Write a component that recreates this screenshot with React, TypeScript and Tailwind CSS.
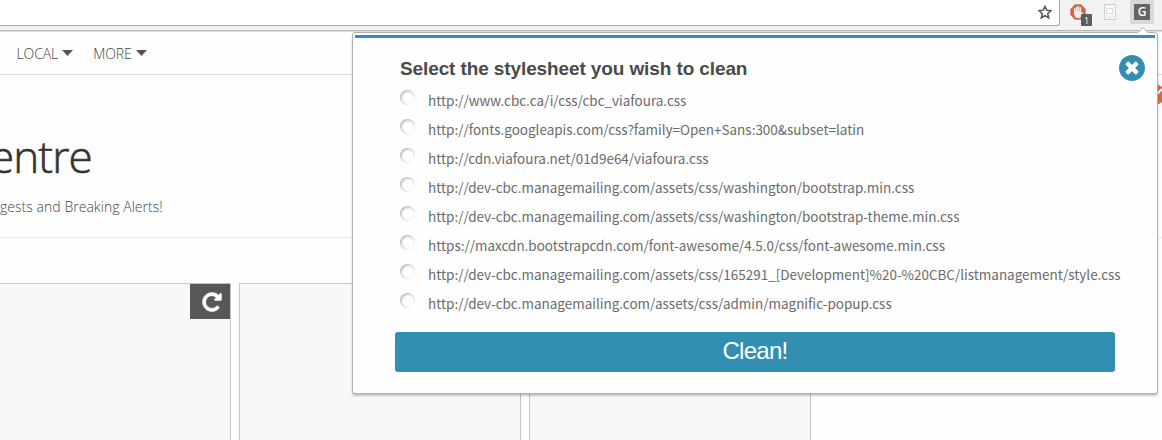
const SHEETS = [
  'http://www.cbc.ca/i/css/cbc_viafoura.css',
  'http://fonts.googleapis.com/css?family=Open+Sans:300&subset=latin',
  'http://cdn.viafoura.net/01d9e64/viafoura.css',
  'http://dev-cbc.managemailing.com/assets/css/washington/bootstrap.min.css',
  'http://dev-cbc.managemailing.com/assets/css/washington/bootstrap-theme.min.css',
  'https://maxcdn.bootstrapcdn.com/font-awesome/4.5.0/css/font-awesome.min.css',
  'http://dev-cbc.managemailing.com/assets/css/165291_[Development]%20-%20CBC/listmanagement/style.css',
  'http://dev-cbc.managemailing.com/assets/css/admin/magnific-popup.css',
];

function Toolbar() {
  return (
    <header className="flex h-[31px] shrink-0 border-b border-[#b6b6b6] bg-[#f2f2f2]">
      <div className="flex h-[26px] w-[1060px] shrink-0 items-center justify-end rounded-br-[3px] border-r border-b border-[#a9a9a9] bg-white pr-[7px]">
        <svg className="-mt-px h-[14px] w-[14px]" viewBox="1 1 14 14" fill="none" stroke="#5a5a5a" strokeWidth="1.5">
          <path d="M8 2.300 9.800 6.2l4.200.4-3.300 3.100 1.100 4.300L8 11.600 4.200 14l1.100-4.300L2 6.600l4.200-.4z" />
        </svg>
      </div>
      <div className="flex grow items-start pl-[10px]">
        <div className="relative mt-[4px] h-[22px] w-[22px]">
          <svg className="h-[16px] w-[16px]" viewBox="0 0 16 16">
            <path d="M5 .3h6L15.700 5v6L11 15.700H5L.3 11V5z" fill="#cb6a45" />
            <path d="M4 8V4.500q.7-.8 1.400 0V7l.4 0V3q.8-.9 1.500 0v4h.4V2.500q.8-.8 1.500 0V7h.4V3.500q.8-.8 1.500 0V9l1-1q1-.3 1 .6L10.800 13 9.500 14H6.500Q4 12.500 4 8z" fill="#f4ece9" />
          </svg>
          <span className="absolute top-[10px] left-[11px] flex h-[12px] w-[11px] items-center justify-center rounded-[1px] bg-[#5c5c5c] font-['Open_Sans',sans-serif] text-[9px] leading-none text-white">1</span>
        </div>
        <svg className="mt-[4px] ml-[12px] h-[16px] w-[12px]" viewBox="0 0 12 16" fill="none">
          <path d="M.5.5h11v15H.5z" fill="#f7f7f7" stroke="#cfcfcf" />
          <path d="M2.500 4.500h6v5h-6z" fill="#fff" stroke="#dadada" />
          <path d="M2 13h8" stroke="#e6e6e6" />
        </svg>
        <div className="ml-[14px] flex h-[24px] w-[24px] items-center justify-center rounded-[2px] bg-[#d8d8d8]">
          <span className="flex h-[16px] w-[16px] items-center justify-center rounded-[1px] bg-[#666] font-['Open_Sans',sans-serif] text-[12px] leading-none font-semibold text-white">G</span>
        </div>
      </div>
    </header>
  );
}

function NavItem({ label }: { label: string }) {
  return (
    <a className="flex items-center gap-[4px] text-[14px] font-light tracking-[-0.1px] text-[#444]">
      {label}
      <svg className="h-[6px] w-[11px]" viewBox="0 0 11 6">
        <path d="M0 0h11L5.500 6z" fill="#555" />
      </svg>
    </a>
  );
}

function Page() {
  return (
    <div className="flex grow flex-col font-['Open_Sans',sans-serif]">
      <nav className="flex h-[44px] shrink-0 items-center gap-[20px] border-t border-b border-t-[#dedede] border-b-[#d8d8d8] pl-[16.5px]">
        <NavItem label="LOCAL" />
        <NavItem label="MORE" />
      </nav>
      <section className="flex h-[163px] shrink-0 flex-col border-b border-[#ececec]">
        <h1 className="mt-[51px] -ml-[10px] h-[60px] text-[44px] leading-[60px] font-light tracking-[-0.9px] text-[#333] [-webkit-text-stroke:0.6px_#333]">entre</h1>
        <p className="mt-[11px] text-[14px] leading-[20px] font-light tracking-[0.04px] text-[#444]">gests and Breaking Alerts!</p>
      </section>
      <div className="mt-[45px] flex grow gap-[8px]">
        <div className="flex w-[231px] items-start justify-end border-t border-r border-[#c6c6c6] bg-[#f8f8f8]">
          <div className="flex h-[35px] w-[40px] items-center justify-center bg-[#575757] pl-[4px]">
            <svg className="h-[22px] w-[22px]" viewBox="0 0 1792 1792" fill="#fff" stroke="#fff" strokeWidth="50">
              <path d="M1664 256v448q0 26-19 45t-45 19h-448q-42 0-59-40-17-39 14-69l138-138q-148-137-349-137-104 0-198.500 40.500t-163.500 109.500-109.500 163.500-40.500 198.500 40.500 198.500 109.500 163.500 163.500 109.500 198.500 40.500q119 0 225-52t179-147q7-10 23-12 15 0 25 9l137 138q9 8 9.500 20.500t-7.500 22.500q-109 132-264 204.500t-327 72.500q-156 0-298-61t-245-164-164-245-61-298 61-298 164-245 245-164 298-61q147 0 284.500 55.500t244.500 156.500l130-129q29-31 70-14 39 17 39 59z" />
            </svg>
          </div>
        </div>
        <div className="w-[282px] border-x border-t border-[#c6c6c6] bg-[#f8f8f8]" />
        <div className="w-[282px] border-x border-t border-[#c6c6c6] bg-[#f8f8f8]" />
      </div>
    </div>
  );
}

function Popup() {
  return (
    <div className="absolute top-[32px] left-[352px] flex h-[362px] w-[806px] flex-col rounded-[3px] border border-[#b0b0b0] bg-[#fefefe] px-[2px] pt-[2px] shadow-[0_2px_2px_rgba(0,0,0,0.22)]">
      <svg className="absolute -top-[6px] right-[8px] h-[7px] w-[12px]" viewBox="0 0 12 7">
        <path d="M0 6.500 6 .5l6 6" fill="#fff" stroke="#b0b0b0" />
      </svg>
      <div className="flex grow flex-col border-t-3 border-[#338fb1] px-[40px]">
        <div className="mt-[18px] flex h-[26px] items-center justify-between pl-[5px]">
          <h2 className="font-['Liberation_Sans',sans-serif] text-[19px] leading-[26px] font-bold tracking-[-0.11px] text-[#4a4a4a]">Select the stylesheet you wish to clean</h2>
          <svg className="mt-[-3px] -mr-[30px] h-[26px] w-[26px]" viewBox="0 128 1536 1536">
            <path fill="#338fb1" d="M1149 1122q0-26-19-45L949 896l181-181q19-19 19-45 0-27-19-46l-90-90q-19-19-46-19-26 0-45 19L768 715 587 534q-19-19-45-19-27 0-46 19l-90 90q-19 19-19 46 0 26 19 45l181 181-181 181q-19 19-19 45 0 27 19 46l90 90q19 19 46 19 26 0 45-19l181-181 181 181q19 19 45 19 27 0 46-19l90-90q19-19 19-46zm387-226q0 209-103 385.500T1153.500 1561 768 1664t-385.500-103T103 1281.500 0 896t103-385.500T382.500 231 768 128t385.500 103T1433 510.500 1536 896z" />
          </svg>
        </div>
        <ul className="mt-[5px] pl-[5px]">
          {SHEETS.map((url) => (
            <li key={url} className="flex h-[29px] items-start">
              <span className="mt-[3px] h-[15px] w-[15px] shrink-0 rounded-full bg-white shadow-[inset_1px_1px_3px_#aaa]" />
              <span className="ml-[13px] -mt-px font-['Noto_Sans_CJK_SC',sans-serif] text-[13.48px] leading-[28px] whitespace-nowrap text-[#6a6a6a]">{url}</span>
            </li>
          ))}
        </ul>
        <button className="mt-[13px] h-[40px] w-[720px] shrink-0 rounded-[3px] bg-[#338fb1] pb-[2px] font-['Liberation_Sans',sans-serif] text-[24px] leading-[36px] tracking-[-0.7px] text-white">Clean!</button>
      </div>
    </div>
  );
}

export default function App() {
  return (
    <div className="relative flex h-[440px] w-[1162px] flex-col overflow-hidden bg-[#fefefe]">
      <Toolbar />
      <Page />
      <div className="absolute top-[84px] left-[1144px] flex h-[21px] w-[21px] items-center justify-center rounded-full bg-[#cd6f47]">
        <svg className="-mt-[3px] h-[11px] w-[14px]" viewBox="0 0 14 11" fill="none" stroke="#fff" strokeWidth="2">
          <path d="M1 6l4 4L14 1" />
        </svg>
      </div>
      <Popup />
    </div>
  );
}
